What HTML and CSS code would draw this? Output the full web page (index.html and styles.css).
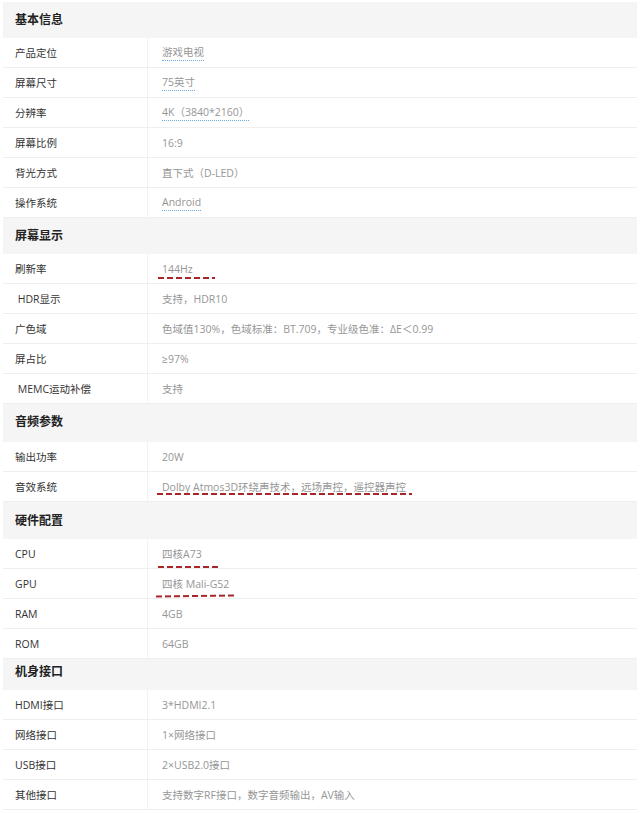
FILE: index.html
```html
<!DOCTYPE html>
<html lang="zh-CN">
<head>
    <meta charset="UTF-8">
    <meta name="viewport" content="width=device-width, initial-scale=1.0">
    <title>参数配置</title>
    <link rel="stylesheet" href="styles.css">
</head>
<body>
    <div class="specs">
        <h2 class="group-title">基本信息</h2>
        <div class="row"><div class="label">产品定位</div><div class="value"><span class="link">游戏电视</span></div></div>
        <div class="row"><div class="label">屏幕尺寸</div><div class="value"><span class="link">75英寸</span></div></div>
        <div class="row"><div class="label">分辨率</div><div class="value"><span class="link">4K（3840*2160）</span></div></div>
        <div class="row"><div class="label">屏幕比例</div><div class="value">16:9</div></div>
        <div class="row"><div class="label">背光方式</div><div class="value">直下式（D-LED）</div></div>
        <div class="row"><div class="label">操作系统</div><div class="value"><span class="link">Android</span></div></div>

        <h2 class="group-title">屏幕显示</h2>
        <div class="row"><div class="label">刷新率</div><div class="value"><span class="mark mark-hz">144Hz</span></div></div>
        <div class="row"><div class="label">&nbsp;HDR显示</div><div class="value">支持，HDR10</div></div>
        <div class="row"><div class="label">广色域</div><div class="value">色域值130%，色域标准：BT.709，专业级色准：ΔE＜0.99</div></div>
        <div class="row"><div class="label">屏占比</div><div class="value">≥97%</div></div>
        <div class="row"><div class="label">&nbsp;MEMC运动补偿</div><div class="value">支持</div></div>

        <h2 class="group-title group-title-tall">音频参数</h2>
        <div class="row"><div class="label">输出功率</div><div class="value">20W</div></div>
        <div class="row"><div class="label">音效系统</div><div class="value"><span class="mark mark-sound">Dolby Atmos3D环绕声技术，远场声控，遥控器声控</span></div></div>

        <h2 class="group-title group-title-mid">硬件配置</h2>
        <div class="row"><div class="label">CPU</div><div class="value"><span class="mark mark-cpu">四核A73</span></div></div>
        <div class="row"><div class="label">GPU</div><div class="value"><span class="mark mark-gpu">四核 Mali-G52</span></div></div>
        <div class="row"><div class="label">RAM</div><div class="value">4GB</div></div>
        <div class="row"><div class="label">ROM</div><div class="value">64GB</div></div>

        <h2 class="group-title group-title-short">机身接口</h2>
        <div class="row"><div class="label">HDMI接口</div><div class="value">3*HDMI2.1</div></div>
        <div class="row"><div class="label">网络接口</div><div class="value">1×网络接口</div></div>
        <div class="row"><div class="label">USB接口</div><div class="value">2×USB2.0接口</div></div>
        <div class="row"><div class="label">其他接口</div><div class="value">支持数字RF接口，数字音频输出，AV输入</div></div>
    </div>
</body>
</html>
```

FILE: styles.css
```css
body { margin: 0; background: #fff; font-family: "Open Sans", "Noto Sans CJK SC", sans-serif; }
.specs { padding: 2px 3px 0; }
.group-title { margin: 0; height: 36px; line-height: 36px; padding-left: 12px; background: #f5f5f5; font-size: 12px; font-weight: bold; color: #222; }
.group-title-tall { height: 38px; line-height: 36px; }
.group-title-mid { height: 37px; line-height: 37px; }
.group-title-short { height: 31px; line-height: 26px; }
.row { display: grid; grid-template-columns: 145px 1fr; height: 30px; border-bottom: 1px solid #efefef; box-sizing: border-box; font-size: 10.5px; }
.label { display: flex; align-items: center; padding-left: 12px; border-right: 1px solid #f2f2f2; color: #333; white-space: pre; }
.value { display: flex; align-items: center; padding-left: 14px; color: #969696; }
.link { border-bottom: 1px dotted #6ea8dc; padding-bottom: 1px; }

/* hand-drawn red annotation lines */
.mark { position: relative; }
.mark::after { content: ""; position: absolute; left: -5px; right: -6px; bottom: -6px; height: 2px; background: repeating-linear-gradient(to right, #a8262a 0 6px, transparent 6px 9px); }
.mark-hz::after { left: -4px; right: -22px; bottom: -3px; }
.mark-sound::after { left: -5px; right: -6px; bottom: -1px; }
.mark-cpu::after { left: -4px; right: -16px; bottom: -7px; }
.mark-gpu::after { left: -6px; right: -5px; bottom: -6px; transform: rotate(-0.6deg); }
```
